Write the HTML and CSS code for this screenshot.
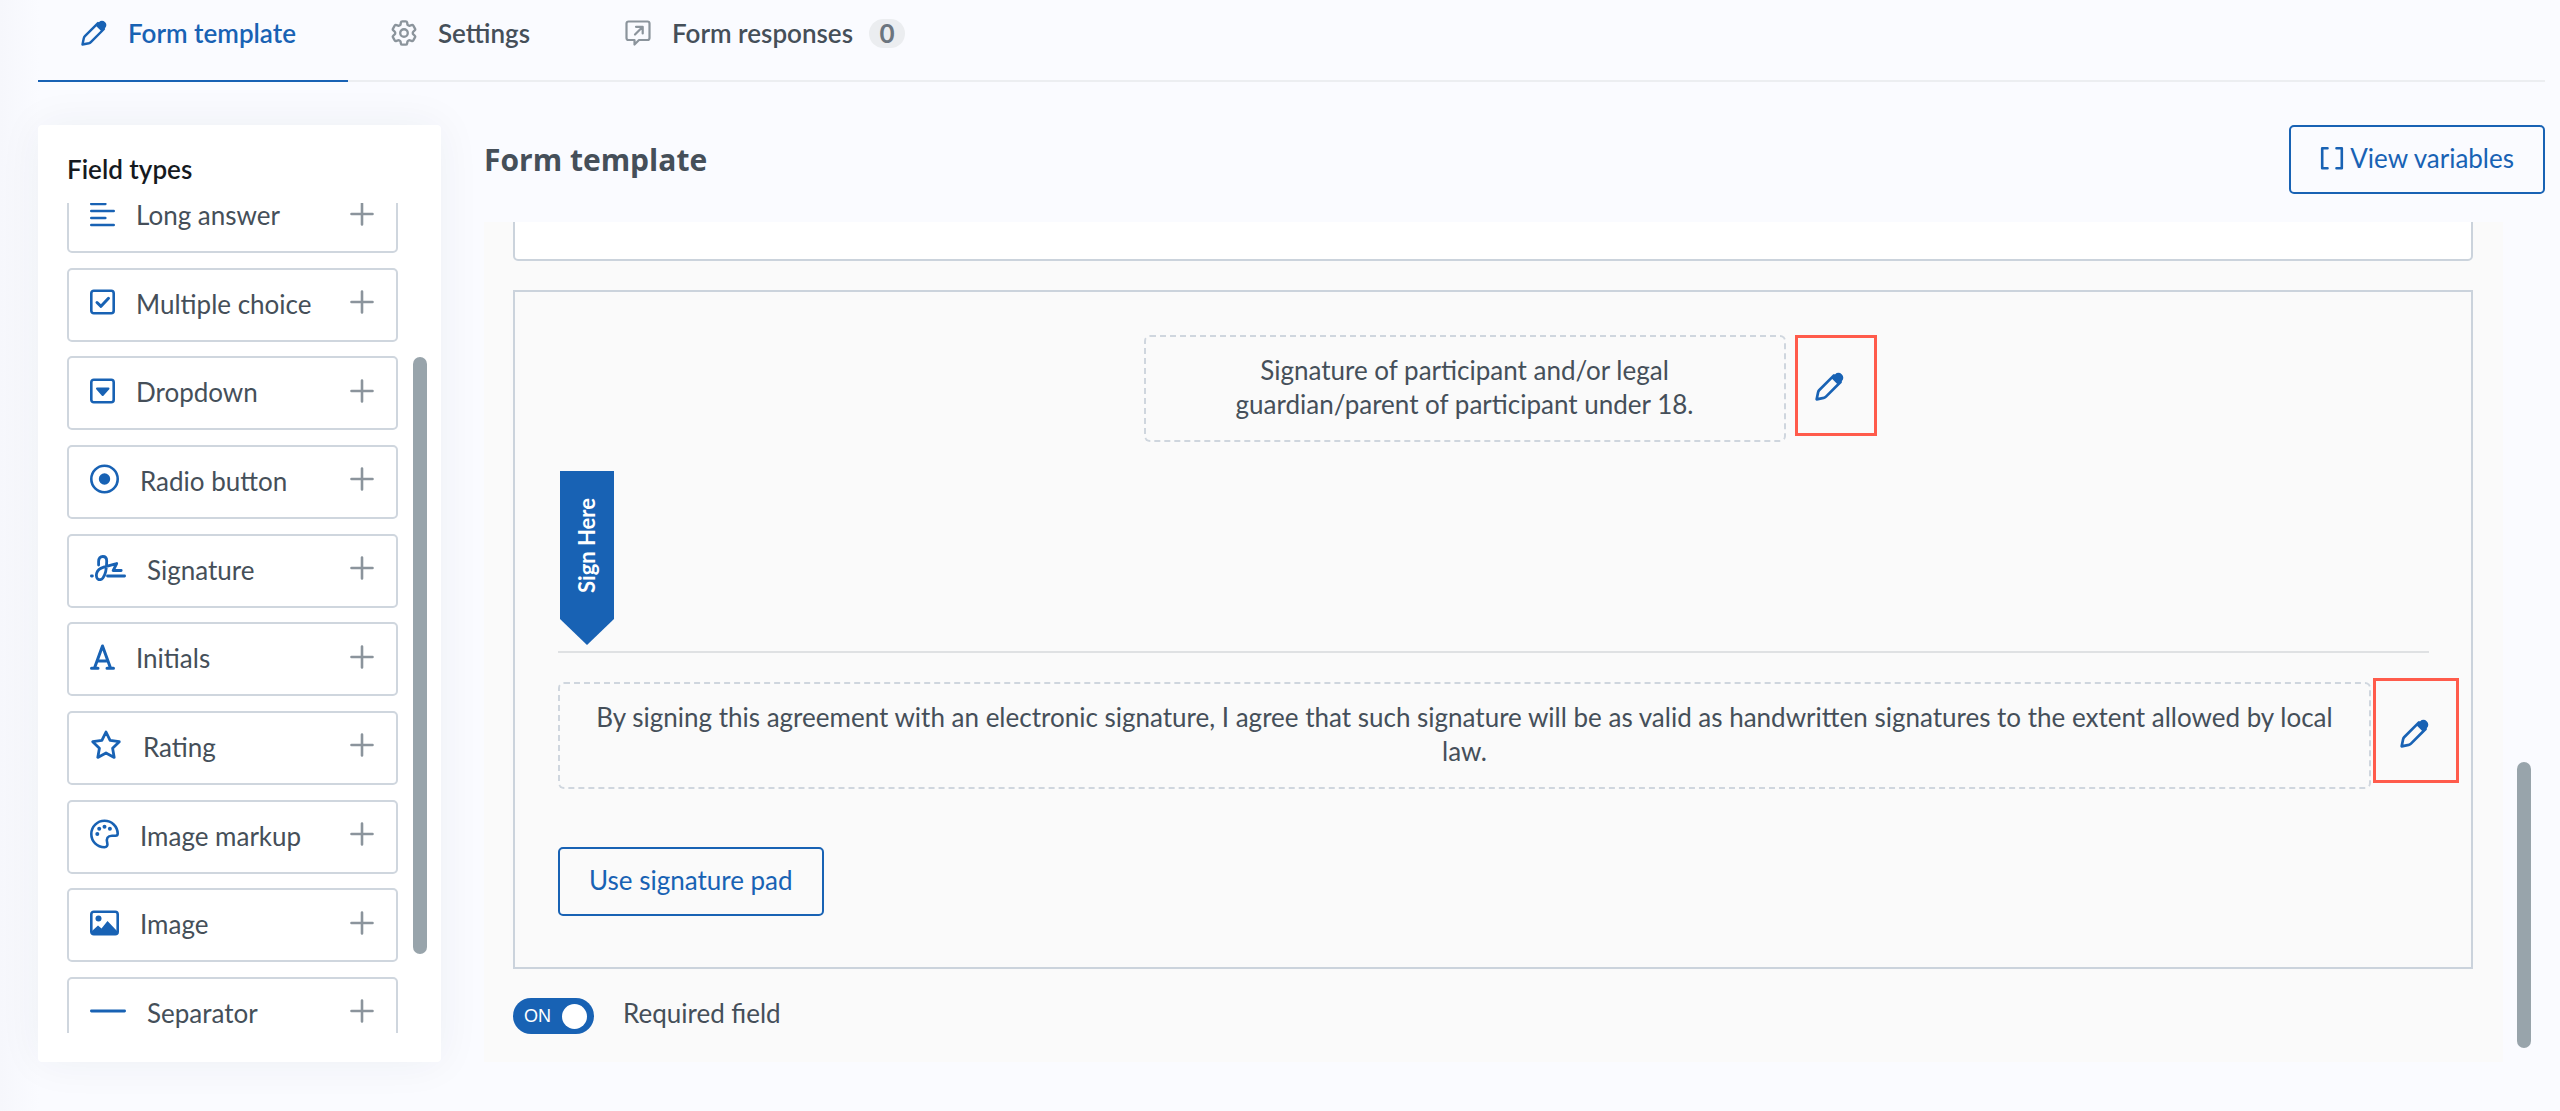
FILE: index.html
```html
<!DOCTYPE html>
<html lang="en">
<head>
  <meta charset="UTF-8" />
  <meta name="viewport" content="width=device-width, initial-scale=1.0"/>
  <title>Form template</title>
  <link rel="stylesheet" href="styles.css">
</head>
<body>
  <!-- Shared icons -->
  <svg class="sprite" aria-hidden="true">
    <symbol id="pencil" viewBox="0 0 28 28">
      <path d="M1.6 26.4 3 19.6q.3-1.3 1.2-2.2L18.3 3.300l6.400 6.400L10.600 23.800q-.9.9-2.200 1.200z" fill="none" stroke="currentColor" stroke-width="2.600" stroke-linejoin="round"/>
      <path d="M15.700 5.900l3.800-3.800a4.300 4.300 0 0 1 6.200 0l.3.300a4.300 4.300 0 0 1 0 6.200l-3.800 3.800z" fill="currentColor"/>
    </symbol>
    <symbol id="plus" viewBox="0 0 24 24">
      <path d="M12 1.500v21M1.500 12h21" stroke="currentColor" stroke-width="2.600" stroke-linecap="round"/>
    </symbol>
  </svg>

  <nav class="tabs">
    <a href="#template" class="tab active">
      <svg width="26" height="26"><use href="#pencil"/></svg>
      Form template
    </a>
    <a href="#settings" class="tab">
      <svg width="26" height="26" viewBox="2 2 20 20" fill="none" stroke="currentColor" stroke-width="1.800" stroke-linejoin="round">
        <path d="M9.594 3.94c.09-.542.56-.94 1.11-.94h2.593c.55 0 1.02.398 1.11.94l.213 1.281c.063.374.313.686.645.87.074.04.147.083.22.127.325.196.72.257 1.075.124l1.217-.456a1.125 1.125 0 0 1 1.37.49l1.296 2.247a1.125 1.125 0 0 1-.26 1.431l-1.003.827c-.293.241-.438.613-.43.992a7.723 7.723 0 0 1 0 .255c-.008.378.137.75.43.991l1.004.827c.424.35.534.955.26 1.43l-1.298 2.247a1.125 1.125 0 0 1-1.369.491l-1.217-.456c-.355-.133-.75-.072-1.076.124a6.47 6.47 0 0 1-.22.128c-.331.183-.581.495-.644.869l-.213 1.281c-.09.543-.56.94-1.11.94h-2.594c-.55 0-1.019-.398-1.11-.94l-.213-1.281c-.062-.374-.312-.686-.644-.87a6.52 6.52 0 0 1-.22-.127c-.325-.196-.72-.257-1.076-.124l-1.217.456a1.125 1.125 0 0 1-1.369-.49l-1.297-2.247a1.125 1.125 0 0 1 .26-1.431l1.004-.827c.292-.24.437-.613.43-.991a6.932 6.932 0 0 1 0-.255c.007-.38-.138-.751-.43-.992l-1.004-.827a1.125 1.125 0 0 1-.26-1.43l1.297-2.247a1.125 1.125 0 0 1 1.37-.491l1.216.456c.356.133.751.072 1.076-.124.072-.044.146-.086.22-.128.332-.183.582-.495.644-.869l.214-1.28Z"/>
        <circle cx="12" cy="12" r="2.900"/>
      </svg>
      Settings
    </a>
    <a href="#responses" class="tab">
      <svg width="26" height="26" viewBox="0 0 26 26" fill="none" stroke="currentColor" stroke-width="2.200" stroke-linejoin="round" stroke-linecap="round">
        <path d="M3.500 1.500h19a2 2 0 0 1 2 2v14.500a2 2 0 0 1-2 2H14l-4.500 4.500V20h-6a2 2 0 0 1-2-2V3.500a2 2 0 0 1 2-2z"/>
        <path d="M10 14.500l7.500-7.500M11 6.800h6.700v6.700"/>
      </svg>
      Form responses
      <span class="badge">0</span>
    </a>
  </nav>

  <main class="layout">
    <!-- Field types -->
    <aside class="sidebar">
      <h2>Field types</h2>
      <div class="sidebar-body">
        <div class="field-viewport">
          <div class="field-list">
            <button class="field-type">
              <svg class="icon" width="25" height="26" viewBox="0 0 25 26" stroke="currentColor" stroke-width="2.600" stroke-linecap="round"><path d="M1.300 3h14M1.300 10h22.400M1.300 17h14M1.300 24h22.400"/></svg>
              <span>Long answer</span>
              <svg class="plus" width="24" height="24"><use href="#plus"/></svg>
            </button>
            <button class="field-type">
              <svg class="icon" width="25" height="26" viewBox="0 0 25 26" fill="none" stroke="currentColor" stroke-width="2.600" stroke-linecap="round" stroke-linejoin="round"><rect x="1.300" y="1.800" width="22.400" height="22.400" rx="2.500"/><path d="M7 13.500l4 3.800 7.500-8" stroke-width="3"/></svg>
              <span>Multiple choice</span>
              <svg class="plus" width="24" height="24"><use href="#plus"/></svg>
            </button>
            <button class="field-type">
              <svg class="icon" width="25" height="26" viewBox="0 0 25 26"><rect x="1.300" y="1.800" width="22.400" height="22.400" rx="2.500" fill="none" stroke="currentColor" stroke-width="2.600"/><path d="M7 10.500h11.500l-5.800 6.500z" fill="currentColor" stroke="currentColor" stroke-width="2" stroke-linejoin="round"/></svg>
              <span>Dropdown</span>
              <svg class="plus" width="24" height="24"><use href="#plus"/></svg>
            </button>
            <button class="field-type">
              <svg class="icon" width="29" height="30" viewBox="0 0 29 30"><circle cx="14.500" cy="15" r="13.200" fill="none" stroke="currentColor" stroke-width="2.600"/><circle cx="14.500" cy="15" r="5.700" fill="currentColor"/></svg>
              <span>Radio button</span>
              <svg class="plus" width="24" height="24"><use href="#plus"/></svg>
            </button>
            <button class="field-type">
              <svg class="icon" width="36" height="26" viewBox="0 0 36 26" fill="none" stroke="currentColor" stroke-width="2.800" stroke-linecap="round" stroke-linejoin="round"><path d="M1.400 21h1M17.500 21h17.100M8.600 10V6.500C8.600 3.200 10.300 1.500 12.800 1.500c2.600 0 3.900 1.800 3.900 4.500 0 6-1.500 14-3.800 17-1.500 1.900-3.800 2.300-5.200 1-1.400-1.300-1.500-3.800-1-5.800.8-3.200 3-4.700 7-6 4.500-1.500 8.500-2.500 13-3.700l-3.500 7h8"/></svg>
              <span>Signature</span>
              <svg class="plus" width="24" height="24"><use href="#plus"/></svg>
            </button>
            <button class="field-type">
              <svg class="icon" width="25" height="26" viewBox="0 0 25 26" fill="none" stroke="currentColor" stroke-width="3" stroke-linecap="round" stroke-linejoin="round"><path d="M1.500 24.300h6.500M17 24.300h6.500M4.500 24 12.500 2l8 22M7.500 17h10"/></svg>
              <span>Initials</span>
              <svg class="plus" width="24" height="24"><use href="#plus"/></svg>
            </button>
            <button class="field-type">
              <svg class="icon" width="32" height="32" viewBox="0 0 32 32" fill="none" stroke="currentColor" stroke-width="2.800" stroke-linejoin="round"><path d="M16 3l4.100 8.400 9.200 1.300-6.700 6.500 1.600 9.200L16 24l-8.200 4.400 1.600-9.200-6.700-6.500 9.200-1.300z"/></svg>
              <span>Rating</span>
              <svg class="plus" width="24" height="24"><use href="#plus"/></svg>
            </button>
            <button class="field-type">
              <svg class="icon" width="29" height="30" viewBox="0 0 29 30"><path d="M27.700 14.500C27.500 7.300 21.700 1.800 14.500 1.800S1.300 7.700 1.300 15s5.700 13.200 13.200 13.200c2.300 0 3.400-1.700 2.800-3.800-.9-3-.8-4.200.2-5.800 1.100-1.700 2.700-1.900 4.500-1.900h3.500c1.500 0 2.200-.9 2.200-2.200z" fill="none" stroke="currentColor" stroke-width="2.600"/><g fill="currentColor"><circle cx="7.300" cy="15" r="2"/><circle cx="9.200" cy="9.700" r="2"/><circle cx="14.500" cy="7.700" r="2"/><circle cx="19.900" cy="9.700" r="2"/></g></svg>
              <span>Image markup</span>
              <svg class="plus" width="24" height="24"><use href="#plus"/></svg>
            </button>
            <button class="field-type">
              <svg class="icon" width="29" height="26" viewBox="0 0 29 26"><rect x="1.300" y="1.800" width="26.400" height="22.400" rx="2.500" fill="none" stroke="currentColor" stroke-width="2.600"/><circle cx="8.500" cy="8.500" r="3" fill="currentColor"/><path d="M2 21l6-5.500 3.500 3L17.500 11l9.500 10v3H2z" fill="currentColor"/></svg>
              <span>Image</span>
              <svg class="plus" width="24" height="24"><use href="#plus"/></svg>
            </button>
            <button class="field-type">
              <svg class="icon" width="36" height="26" viewBox="0 0 36 26" stroke="currentColor" stroke-width="2.800" stroke-linecap="round"><path d="M1.400 13h33.200"/></svg>
              <span>Separator</span>
              <svg class="plus" width="24" height="24"><use href="#plus"/></svg>
            </button>
          </div>
        </div>
        <div class="scroll-track"><div class="scroll-thumb scroll-thumb-fields"></div></div>
      </div>
    </aside>

    <!-- Form editor -->
    <section class="editor">
      <header class="editor-header">
        <h1>Form template</h1>
        <button class="btn-outline">
          <svg width="24" height="24" viewBox="0 0 24 24" fill="none" stroke="currentColor" stroke-width="2.600" stroke-linecap="round" stroke-linejoin="round"><path d="M7.500 2.200H2.200v20h5.300M16.500 2.200h5.300v20h-5.300"/></svg>
          View variables
        </button>
      </header>

      <div class="editor-body">
        <div class="form-panel">
          <textarea class="answer-box" aria-label="Long answer"></textarea>

          <div class="signature-box">
            <div class="text-row">
              <p class="editable short">Signature of participant and/or legal guardian/parent of participant under 18.</p>
              <button class="edit" aria-label="Edit title">
                <svg width="29" height="29"><use href="#pencil"/></svg>
                <span class="highlight"></span>
              </button>
            </div>

            <div class="sign-line">
              <div class="sign-here"><span>Sign Here</span></div>
            </div>

            <div class="text-row">
              <p class="editable">By signing this agreement with an electronic signature, I agree that such signature will be as valid as handwritten signatures to the extent allowed by local law.</p>
              <button class="edit" aria-label="Edit agreement">
                <svg width="29" height="29"><use href="#pencil"/></svg>
                <span class="highlight highlight-large"></span>
              </button>
            </div>

            <button class="btn-outline btn-pad">Use signature pad</button>
          </div>

          <div class="required">
            <input type="checkbox" class="toggle" id="required" checked>
            <label for="required">Required field</label>
          </div>
        </div>
        <div class="scroll-track"><div class="scroll-thumb scroll-thumb-form"></div></div>
      </div>
    </section>
  </main>
</body>
</html>
```

FILE: styles.css
```css
* {
  box-sizing: border-box;
}

body {
  font-family: Lato, 'Open Sans', sans-serif;
  font-size: 26px;
  line-height: 34px;
  margin: 0;
  height: 100vh;
  padding: 0 15px 49px 38px;
  display: flex;
  flex-direction: column;
  overflow: hidden;
  background: linear-gradient(to right, #f6f7fc, #fafbff 40px);
  color: #454f59;
}

button {
  font: inherit;
  color: inherit;
  background: none;
  border: none;
  padding: 0;
  cursor: pointer;
}

svg {
  flex: none;
  display: block;
}

.sprite {
  position: absolute;
  width: 0;
  height: 0;
}

/* Tabs */
.tabs {
  display: flex;
  border-bottom: 2px solid #eceef1;
}

.tab {
  display: flex;
  align-items: center;
  gap: 21px;
  padding: 16px 52px 30px 43px;
  margin-bottom: -2px;
  border-bottom: 2px solid transparent;
  color: #454f59;
  font-weight: 600;
  text-decoration: none;
}

.tab svg {
  color: #8b949c;
}

.tab.active {
  border-bottom-color: #1862b4;
}

.tab.active,
.tab.active svg {
  color: #1862b4;
}

.badge {
  width: 36px;
  line-height: 29px;
  margin-left: -5px;
  border-radius: 15px;
  background: #ebedf0;
  color: #6b757f;
  font-weight: bold;
  text-align: center;
}

.layout {
  flex: 1;
  min-height: 0;
  display: flex;
  gap: 43px;
  margin-top: 43px;
}

/* Sidebar */
.sidebar {
  width: 403px;
  display: flex;
  flex-direction: column;
  padding: 27px 14px 29px 29px;
  background: #fff;
  border-radius: 4px;
  box-shadow: 0 0 44px rgba(40, 50, 70, 0.06);
}

.sidebar h2 {
  margin: 0 0 17px;
  font-size: 26px;
  font-weight: 600;
  color: #151a1f;
}

.sidebar-body {
  flex: 1;
  min-height: 0;
  display: flex;
  gap: 15px;
}

.field-viewport {
  flex: 1;
  overflow: hidden;
}

.field-list {
  display: flex;
  flex-direction: column;
  justify-content: space-between;
  height: 872px;
  margin-top: -24px;
}

.field-type {
  display: flex;
  align-items: center;
  gap: 21px;
  width: 100%;
  height: 74px;
  padding: 0 22px 5px 21px;
  border: 2px solid #cfd6de;
  border-radius: 5px;
  background: #fff;
}

.field-type span {
  padding-top: 3px;
}

.field-type .icon {
  color: #1862b4;
}

.field-type .plus {
  margin-left: auto;
  color: #8b949c;
}

/* Scrollbars */
.scroll-track {
  position: relative;
  width: 14px;
}

.scroll-thumb {
  position: absolute;
  width: 100%;
  border-radius: 7px;
  background: #98a4ab;
}

.scroll-thumb-fields {
  top: 18.5%;
  height: 72%;
}

.scroll-thumb-form {
  top: 64.3%;
  height: 34%;
}

/* Editor */
.editor {
  flex: 1;
  min-width: 0;
  display: flex;
  flex-direction: column;
}

.editor-header {
  display: flex;
  align-items: center;
  justify-content: space-between;
  margin-bottom: 28px;
}

.editor-header h1 {
  margin: 0;
  font-family: 'Open Sans', sans-serif;
  font-size: 30px;
  font-weight: bold;
}

.btn-outline {
  display: flex;
  align-items: center;
  gap: 6px;
  padding: 14px 29px 17px;
  border: 2px solid #1862b4;
  border-radius: 5px;
  color: #1862b4;
}

.editor-body {
  flex: 1;
  min-height: 0;
  display: flex;
  gap: 14px;
  padding-right: 14px;
}

.form-panel {
  flex: 1;
  min-width: 0;
  display: flex;
  flex-direction: column;
  gap: 29px;
  padding: 0 30px 0 29px;
  background: #fafafa;
  overflow: hidden;
}

.answer-box {
  display: block;
  flex: none;
  width: 100%;
  height: 100px;
  margin: -61px 0 0;
  border: 2px solid #cbd3dc;
  border-radius: 5px;
  background: #fff;
  resize: none;
}

.signature-box {
  flex: none;
  padding: 43px 42px 51px 43px;
  border: 2px solid #cbd3dc;
}

.text-row {
  display: flex;
  align-items: center;
  justify-content: center;
  gap: 29px;
}

.editable {
  flex: 1;
  margin: 0;
  padding: 16px 30px 19px;
  border: 2px dashed #cfd6de;
  border-radius: 6px;
  text-align: center;
}

.editable.short {
  flex: 0 0 642px;
}

.edit {
  position: relative;
  padding-bottom: 4px;
  color: #1862b4;
}

/* Red frame around the edit buttons */
.highlight {
  position: absolute;
  top: -37px;
  left: -20px;
  width: 82px;
  height: 101px;
  border: 3px solid #ff5b4b;
}

.highlight-large {
  top: -41px;
  left: -27px;
  width: 86px;
  height: 105px;
}

.sign-line {
  margin: 29px 0;
  padding: 0 2px 6px;
  border-bottom: 2px solid #dfe1e3;
}

.sign-here {
  display: flex;
  align-items: center;
  justify-content: center;
  width: 54px;
  height: 174px;
  padding-bottom: 26px;
  background: #1862b4;
  clip-path: polygon(0 0, 100% 0, 100% 85%, 50% 100%, 0 85%);
}

.sign-here span {
  writing-mode: vertical-rl;
  transform: rotate(180deg);
  color: #fff;
  font-size: 22px;
  font-weight: bold;
}

.btn-pad {
  margin-top: 58px;
}

/* Required toggle */
.required {
  display: flex;
  gap: 29px;
  line-height: 30px;
}

.toggle {
  appearance: none;
  display: flex;
  align-items: center;
  justify-content: space-between;
  width: 81px;
  height: 36px;
  margin: 0;
  padding: 0 7px 0 11px;
  border-radius: 18px;
  background: #1862b4;
  cursor: pointer;
}

.toggle::before {
  content: "ON";
  color: #fff;
  font-size: 18px;
}

.toggle::after {
  content: "";
  width: 25px;
  height: 25px;
  border-radius: 50%;
  background: #fff;
}
```
